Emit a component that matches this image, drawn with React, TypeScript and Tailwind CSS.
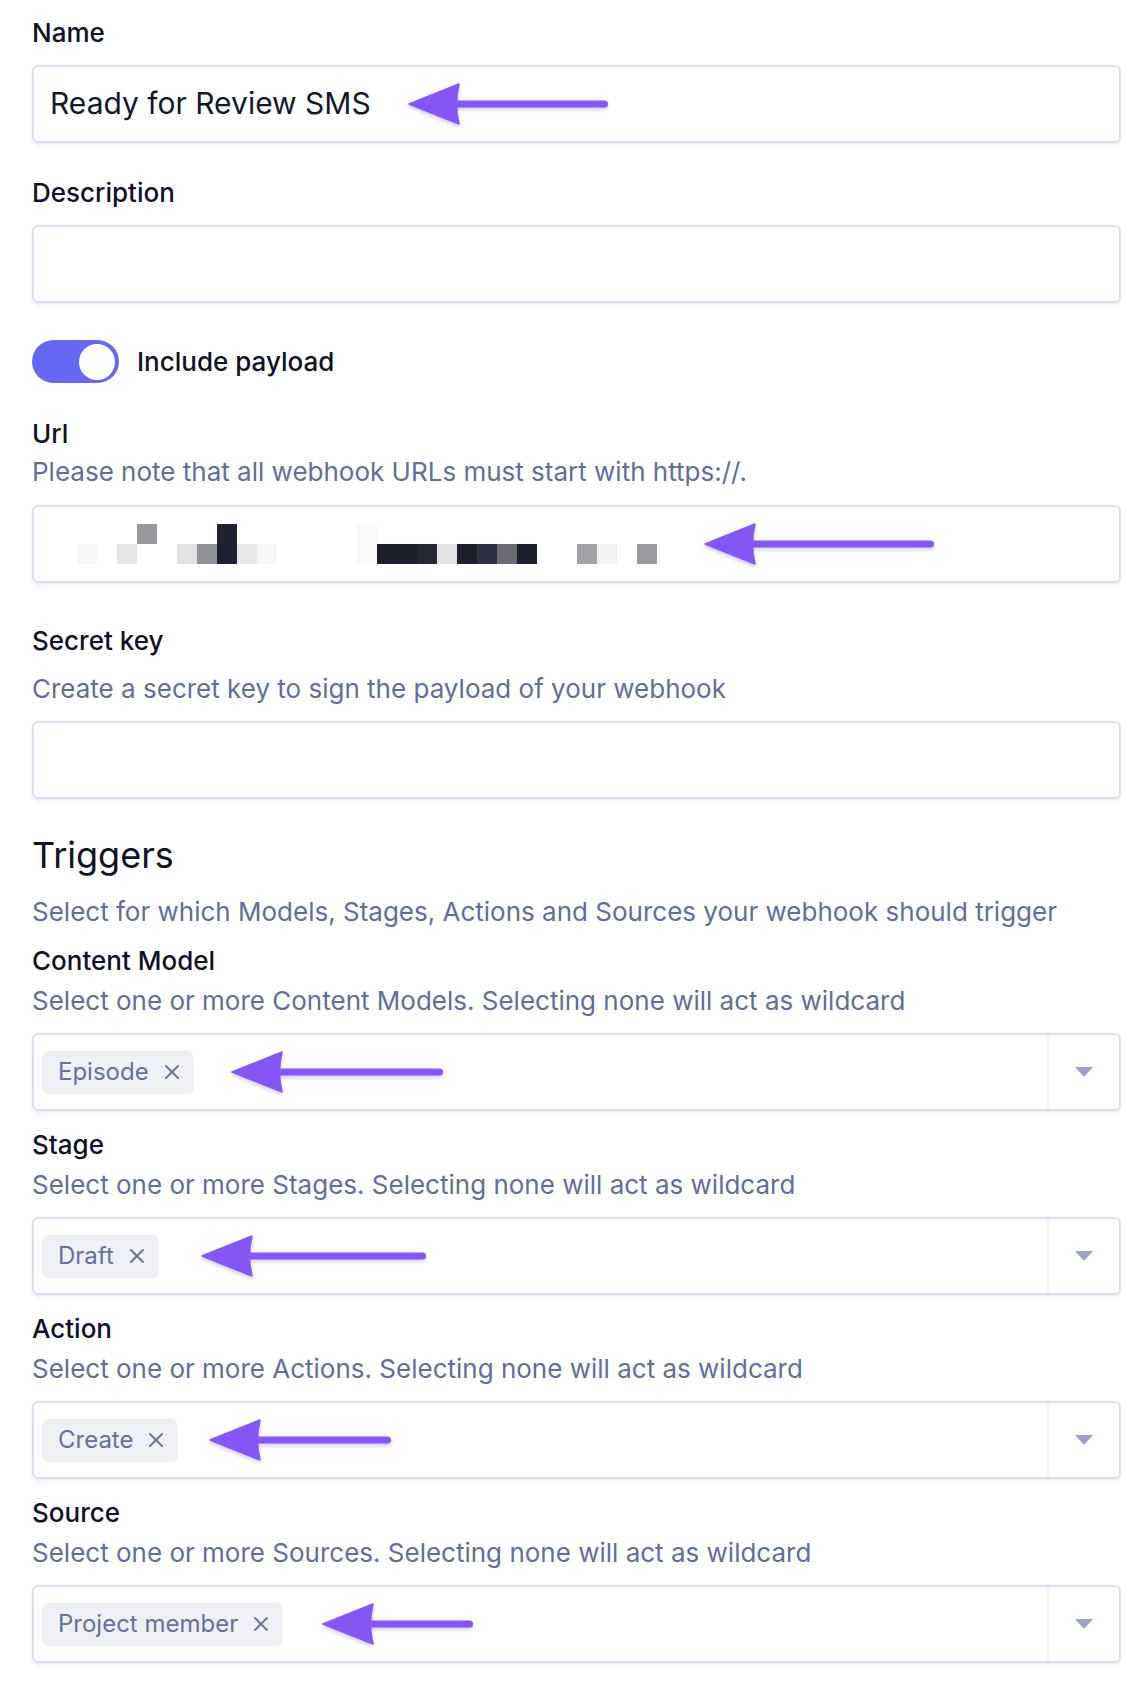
import React from 'react';

const urlBlocks: { col: number; row: 'top' | 'bottom' | 'both'; color: string }[] = [
  { col: 0, row: 'bottom', color: '#f7f7f7' },
  { col: 2, row: 'bottom', color: '#e6e6e6' },
  { col: 3, row: 'top', color: '#98989e' },
  { col: 5, row: 'bottom', color: '#e2e2e2' },
  { col: 6, row: 'bottom', color: '#929299' },
  { col: 7, row: 'both', color: '#1e2130' },
  { col: 8, row: 'bottom', color: '#e6e7e7' },
  { col: 9, row: 'bottom', color: '#f7f7f7' },
  { col: 14, row: 'both', color: '#f9f9f9' },
  { col: 15, row: 'bottom', color: '#1c1f2e' },
  { col: 16, row: 'bottom', color: '#1c1f2e' },
  { col: 17, row: 'bottom', color: '#252733' },
  { col: 18, row: 'bottom', color: '#e2e2e2' },
  { col: 19, row: 'bottom', color: '#1c1f2e' },
  { col: 20, row: 'bottom', color: '#2f3142' },
  { col: 21, row: 'bottom', color: '#6b6c73' },
  { col: 22, row: 'bottom', color: '#1c1f2e' },
  { col: 25, row: 'bottom', color: '#a2a2a6' },
  { col: 26, row: 'bottom', color: '#f2f2f2' },
  { col: 28, row: 'bottom', color: '#9a9aa0' },
];

const triggers = [
  { label: 'Content Model', hint: 'Select one or more Content Models. Selecting none will act as wildcard', chip: 'Episode', gap: 'ml-[36px]', len: 215 },
  { label: 'Stage', hint: 'Select one or more Stages. Selecting none will act as wildcard', chip: 'Draft', gap: 'ml-[41px]', len: 228 },
  { label: 'Action', hint: 'Select one or more Actions. Selecting none will act as wildcard', chip: 'Create', gap: 'ml-[30px]', len: 185 },
  { label: 'Source', hint: 'Select one or more Sources. Selecting none will act as wildcard', chip: 'Project member', gap: 'ml-[38px]', len: 154 },
];

function Arrow({ length }: { length: number }) {
  return (
    <svg width={length} height="44" viewBox={`0 0 ${length} 44`} className="shrink-0 drop-shadow-[0_2px_2px_rgba(80,50,180,0.28)]">
      <rect x="44" y="18.5" width={length - 46} height="7" rx="3.5" fill="#8457f5" />
      <path d="M2 22 L52 2 Q47 22 52 42 Z" fill="#8457f5" strokeLinejoin="round" stroke="#8457f5" strokeWidth="1.5" />
    </svg>
  );
}

function Label({ children, className = '' }: { children: React.ReactNode; className?: string }) {
  return <div className={`text-[26px] leading-[32px] font-medium text-[#0f1124] ${className}`}>{children}</div>;
}

function Hint({ children, className = '' }: { children: React.ReactNode; className?: string }) {
  return <div className={`text-[26px] leading-[32px] text-[#636d99] ${className}`}>{children}</div>;
}

function Box({ children, className = '' }: { children?: React.ReactNode; className?: string }) {
  return (
    <div className={`h-[78px] w-full border-2 border-[#dadef0] rounded-[6px] bg-white shadow-[0_3px_4px_rgba(30,40,90,0.07)] flex items-center ${className}`}>
      {children}
    </div>
  );
}

export default function App() {
  return (
    <div className="w-[1148px] min-h-[1698px] bg-white pl-[32px] pr-[27px] pt-[17px] font-['Inter','Noto_Sans',sans-serif]">
      <Label>Name</Label>
      <Box className="mt-[16px] pl-[16px]">
        <span className="text-[30px] leading-[36px] pb-[3px] text-[#14172a]">Ready for Review SMS</span>
        <div className="ml-[36px]">
          <Arrow length={203} />
        </div>
      </Box>

      <Label className="mt-[34px]">Description</Label>
      <Box className="mt-[16px]" />

      <div className="mt-[37px] flex items-center gap-[18px]">
        <div className="w-[87px] h-[43px] rounded-full bg-[#6668f4] flex items-center justify-end pr-[4px]">
          <div className="w-[36px] h-[36px] rounded-full bg-white" />
        </div>
        <span className="text-[26px] leading-[32px] font-medium text-[#0f1124]">Include payload</span>
      </div>

      <Label className="mt-[35px]">Url</Label>
      <Hint className="mt-[6px]">Please note that all webhook URLs must start with https://.</Hint>
      <Box className="mt-[17px] pl-[43px]">
        <div className="flex flex-col">
          <div className="flex">
            {Array.from({ length: 29 }).map((_, i) => {
              const b = urlBlocks.find((x) => x.col === i && (x.row === 'top' || x.row === 'both'));
              return <div key={i} className="w-[20px] h-[20px]" style={{ backgroundColor: b ? b.color : 'transparent' }} />;
            })}
          </div>
          <div className="flex">
            {Array.from({ length: 29 }).map((_, i) => {
              const b = urlBlocks.find((x) => x.col === i && (x.row === 'bottom' || x.row === 'both'));
              return <div key={i} className="w-[20px] h-[20px]" style={{ backgroundColor: b ? b.color : 'transparent' }} />;
            })}
          </div>
        </div>
        <div className="ml-[46px]">
          <Arrow length={233} />
        </div>
      </Box>

      <Label className="mt-[42px]">Secret key</Label>
      <Hint className="mt-[16px]">Create a secret key to sign the payload of your webhook</Hint>
      <Box className="mt-[16px]" />

      <div className="mt-[34px] text-[36px] leading-[44px] text-[#0f1124]">Triggers</div>
      <Hint className="mt-[19px]">Select for which Models, Stages, Actions and Sources your webhook should trigger</Hint>

      {triggers.map((t, idx) => (
        <div key={t.label} className={idx === 0 ? 'mt-[17px]' : 'mt-[18px]'}>
          <Label>{t.label}</Label>
          <Hint className="mt-[8px]">{t.hint}</Hint>
          <Box className="mt-[16px] pl-[8px]">
            <div className="flex-1 flex items-center">
              <div className="h-[43px] rounded-[7px] bg-[#eff0f5] flex items-center pl-[16px] pr-[14px] gap-[15px]">
                <span className="text-[24px] leading-none text-[#66709a]">{t.chip}</span>
                <svg width="16" height="16" viewBox="0 0 16 16">
                  <path d="M2 2 L14 14 M14 2 L2 14" stroke="#6b7399" strokeWidth="2" strokeLinecap="round" />
                </svg>
              </div>
              <div className={t.gap}>
                <Arrow length={t.len} />
              </div>
            </div>
            <div className="w-[72px] h-full border-l-2 border-[#f3f4f8] flex items-center justify-center">
              <svg width="18" height="10" viewBox="0 0 18 10">
                <path d="M0 0 L18 0 L9 10 Z" fill="#9ea2c2" />
              </svg>
            </div>
          </Box>
        </div>
      ))}
    </div>
  );
}
